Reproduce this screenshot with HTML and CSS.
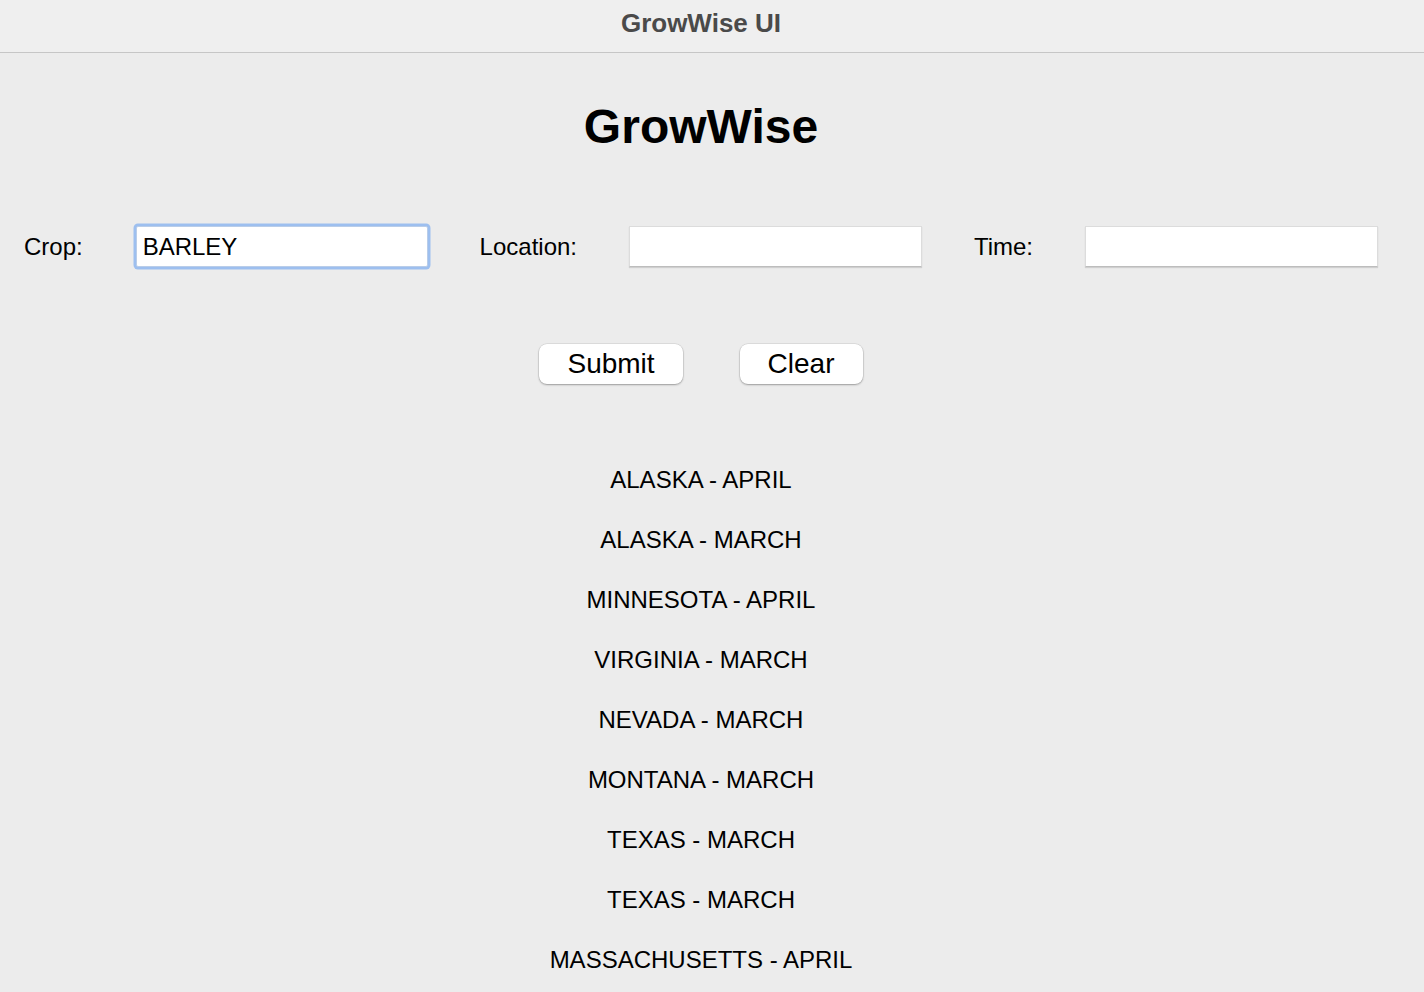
FILE: index.html
```html
<!DOCTYPE html>
<html lang="en">
<head>
    <meta charset="UTF-8">
    <meta name="viewport" content="width=device-width, initial-scale=1.0">
    <title>GrowWise UI</title>
    <link rel="stylesheet" href="styles.css">
</head>
<body>
<!-- Window title bar -->
<div class="titlebar">
    <div class="titlebar-text">GrowWise UI</div>
</div>

<div class="main">
    <h1>GrowWise</h1>

    <!-- Search form -->
    <div class="form-row">
        <label class="field-label" for="crop">Crop:</label>
        <input class="field-input focused" id="crop" type="text" value="BARLEY">
        <label class="field-label" for="location">Location:</label>
        <input class="field-input" id="location" type="text">
        <label class="field-label" for="time">Time:</label>
        <input class="field-input" id="time" type="text">
    </div>

    <div class="buttons">
        <button class="btn">Submit</button>
        <button class="btn">Clear</button>
    </div>

    <!-- Results -->
    <div class="results">
        <div class="result">ALASKA - APRIL</div>
        <div class="result">ALASKA - MARCH</div>
        <div class="result">MINNESOTA - APRIL</div>
        <div class="result">VIRGINIA - MARCH</div>
        <div class="result">NEVADA - MARCH</div>
        <div class="result">MONTANA - MARCH</div>
        <div class="result">TEXAS - MARCH</div>
        <div class="result">TEXAS - MARCH</div>
        <div class="result">MASSACHUSETTS - APRIL</div>
    </div>
</div>
</body>
</html>
```

FILE: styles.css
```css
html, body {
    margin: 0;
    padding: 0;
    height: 100%;
    overflow: hidden;
}

body {
    font-family: 'Liberation Sans', Arial, sans-serif;
    background-color: #ececec;
    color: #000;
}

/* Title bar */
.titlebar {
    height: 52px;
    background-color: #efefef;
    border-bottom: 1px solid #c6c6c6;
    width: 1402px;
    display: flex;
    align-items: center;
    justify-content: center;
    box-sizing: content-box;
    padding-right: 22px;
}

.titlebar-text {
    font-size: 26px;
    font-weight: bold;
    color: #4a4a4a;
    line-height: 30px;
    margin-top: -7px;
}

.main {
    width: 1402px;
    display: flex;
    flex-direction: column;
    align-items: center;
}

h1 {
    font-size: 48px;
    font-weight: bold;
    line-height: 56px;
    margin: 46px 0 0 0;
}

/* Form */
.form-row {
    width: 100%;
    box-sizing: border-box;
    padding: 0 24px;
    margin-top: 71px;
    display: flex;
    align-items: center;
    justify-content: space-between;
}

.field-label {
    font-size: 24px;
    line-height: 28px;
}

.field-input {
    width: 293px;
    height: 41px;
    box-sizing: border-box;
    border: 1px solid #dcdcdc;
    border-bottom-color: #bdbdbd;
    background: #fff;
    box-shadow: 0 1px 1px rgba(0, 0, 0, 0.12);
    font-family: 'Liberation Sans', Arial, sans-serif;
    font-size: 24px;
    padding: 0 6px;
    margin: 0;
    outline: none;
    color: #000;
}

.field-input.focused {
    border: 1px solid #b9cde9;
    border-radius: 2px;
    box-shadow: 0 0 0 2.5px #9dbfef;
    width: 292px;
    margin-left: 1px;
}

/* Buttons */
.buttons {
    display: flex;
    gap: 57px;
    margin-top: 77px;
}

.btn {
    height: 40px;
    padding: 0 28px;
    font-family: 'Liberation Sans', Arial, sans-serif;
    font-size: 28px;
    line-height: 40px;
    color: #000;
    background: #fff;
    border: none;
    border-radius: 8px;
    box-shadow: 0 0 0 0.5px rgba(0, 0, 0, 0.12), 0 1px 2px rgba(0, 0, 0, 0.3);
    cursor: pointer;
}

/* Results list */
.results {
    margin-top: 66px;
    display: flex;
    flex-direction: column;
    align-items: center;
}

.result {
    font-size: 24px;
    line-height: 60px;
}
```
